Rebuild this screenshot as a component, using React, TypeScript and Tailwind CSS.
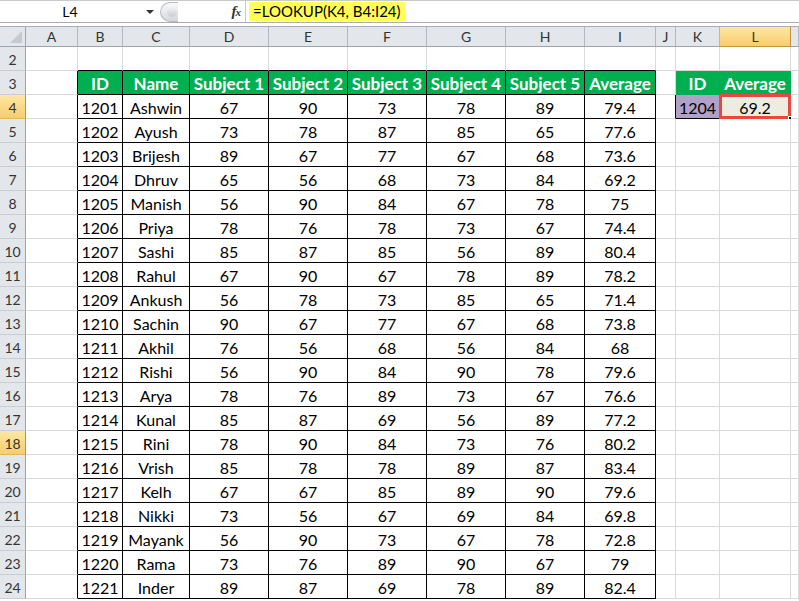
import React from 'react';

const colWidths = [
  'w-[52px]', 'w-[45px]', 'w-[67px]', 'w-[79px]', 'w-[79px]', 'w-[79px]',
  'w-[79px]', 'w-[79px]', 'w-[71px]', 'w-[20px]', 'w-[44px]', 'w-[71px]', 'flex-1',
];
const colNames = ['A', 'B', 'C', 'D', 'E', 'F', 'G', 'H', 'I', 'J', 'K', 'L', 'M'];

const headers = ['ID', 'Name', 'Subject 1', 'Subject 2', 'Subject 3', 'Subject 4', 'Subject 5', 'Average'];

const students: (string | number)[][] = [
  [1201, 'Ashwin', 67, 90, 73, 78, 89, 79.4],
  [1202, 'Ayush', 73, 78, 87, 85, 65, 77.6],
  [1203, 'Brijesh', 89, 67, 77, 67, 68, 73.6],
  [1204, 'Dhruv', 65, 56, 68, 73, 84, 69.2],
  [1205, 'Manish', 56, 90, 84, 67, 78, 75],
  [1206, 'Priya', 78, 76, 78, 73, 67, 74.4],
  [1207, 'Sashi', 85, 87, 85, 56, 89, 80.4],
  [1208, 'Rahul', 67, 90, 67, 78, 89, 78.2],
  [1209, 'Ankush', 56, 78, 73, 85, 65, 71.4],
  [1210, 'Sachin', 90, 67, 77, 67, 68, 73.8],
  [1211, 'Akhil', 76, 56, 68, 56, 84, 68],
  [1212, 'Rishi', 56, 90, 84, 90, 78, 79.6],
  [1213, 'Arya', 78, 76, 89, 73, 67, 76.6],
  [1214, 'Kunal', 85, 87, 69, 56, 89, 77.2],
  [1215, 'Rini', 78, 90, 84, 73, 76, 80.2],
  [1216, 'Vrish', 85, 78, 78, 89, 87, 83.4],
  [1217, 'Kelh', 67, 67, 85, 89, 90, 79.6],
  [1218, 'Nikki', 73, 56, 67, 69, 84, 69.8],
  [1219, 'Mayank', 56, 90, 73, 67, 78, 72.8],
  [1220, 'Rama', 73, 76, 89, 90, 67, 79],
  [1221, 'Inder', 89, 87, 69, 78, 89, 82.4],
];

const highlightedRows = [4, 18];

function inTable(row: number, col: number) {
  return row >= 3 && row <= 24 && col >= 1 && col <= 8;
}

function Cell({ row, col }: { row: number; col: number }) {
  let right = 'border-r-[#dadada]';
  let bottom = 'border-b-[#dadada]';
  let bg = 'bg-white';
  let text = 'text-black';
  let weight = '';
  let content: React.ReactNode = null;

  // black outline of the data table (borders owned by the cell left / above)
  if (inTable(row, col) || (col === 0 && row >= 3 && row <= 24)) right = 'border-r-black';
  if (inTable(row, col) || (row === 2 && col >= 1 && col <= 8)) bottom = 'border-b-black';

  if (inTable(row, col)) {
    if (row === 3) {
      bg = 'bg-[#00b050]';
      text = 'text-white';
      weight = 'font-bold text-[17px]';
      content = headers[col - 1];
    } else {
      content = students[row - 4][col - 1];
    }
  }

  // lookup block K3:L4
  if (row === 3 && (col === 10 || col === 11)) {
    bg = 'bg-[#00b050]';
    text = 'text-white';
    weight = 'font-bold text-[17px]';
    right = 'border-r-[#00b050]';
    bottom = 'border-b-[#00b050]';
    content = col === 10 ? 'ID' : 'Average';
  }
  if (row === 4 && col === 9) right = 'border-r-black';
  if (row === 4 && col === 10) {
    bg = 'bg-[#b1a0c7]';
    bottom = 'border-b-black';
    content = '1204';
  }
  const selected = row === 4 && col === 11;
  if (selected) {
    bg = 'bg-[#eeece1]';
    content = '69.2';
  }

  return (
    <div
      className={`${colWidths[col]} relative h-full shrink-0 border-r border-b ${right} ${bottom} ${bg} ${text} ${weight} flex items-center justify-center pt-[2px] leading-none`}
    >
      {content}
      {selected && (
        <>
          <div className="absolute -left-[1px] -top-[1px] -right-[1px] -bottom-[1px] border-[3px] border-[#e8483f]" />
          <div className="absolute -right-[3px] -bottom-[3px] h-[5px] w-[5px] bg-black border border-white" />
        </>
      )}
    </div>
  );
}

function RowHeader({ row }: { row: number }) {
  const hl = highlightedRows.includes(row);
  return (
    <div
      className={`w-[26px] h-full shrink-0 border-r border-b flex items-center justify-center pt-[2px] text-[14px] leading-none ${
        hl
          ? 'bg-gradient-to-b from-[#fde7a2] to-[#f7cd6b] border-r-[#c4933f] border-b-[#e1b660] text-[#3d3326]'
          : 'bg-[#e3e7ec] border-r-[#9ea4ab] border-b-[#c9cdd2] text-[#333]'
      }`}
    >
      {row}
    </div>
  );
}

export default function App() {
  const rows = Array.from({ length: 23 }, (_, i) => i + 2);

  return (
    <div className="w-[799px] h-[601px] overflow-hidden bg-white font-['Lato','Noto_Sans',sans-serif] text-[16px] select-none">
      {/* Formula bar */}
      <div className="flex h-[23px] border-t border-b border-t-[#c8cacd] border-b-[#a9acb0] bg-white">
        <div className="relative w-[160px] shrink-0 flex items-center justify-center text-[14px] text-black pr-[20px]">
          L4
          <div className="absolute right-[6px] top-[9px] w-0 h-0 border-l-[4px] border-r-[4px] border-t-[4px] border-l-transparent border-r-transparent border-t-[#333]" />
        </div>
        <div className="w-[18px] shrink-0 flex items-center">
          <div className="h-[20px] w-[18px] rounded-l-full border border-r-0 border-[#b7bbc0] bg-gradient-to-b from-[#fafafa] to-[#d4d7db] flex items-center justify-center">
            <div className="ml-[4px] h-[10px] w-[10px] rounded-full bg-gradient-to-b from-[#f2f2f2] to-[#c8ccd1]" />
          </div>
        </div>
        <div className="w-[67px] shrink-0 flex items-center justify-end pr-[5px]">
          <span className="font-['Liberation_Serif',serif] italic font-bold text-[15px] text-[#333] tracking-[-1px]">
            f<span className="text-[11px]">x</span>
          </span>
        </div>
        <div className="flex-1 border-l border-[#c8cacd] flex items-center pl-[3px]">
          <span className="bg-[#ffff57] h-[19px] px-[4px] flex items-center text-[15px] text-black leading-none">
            =LOOKUP(K4, B4:I24)
          </span>
        </div>
      </div>
      <div className="h-[4px] bg-white border-b border-[#a9acb0]" />

      {/* Column headers */}
      <div className="flex h-[20px]">
        <div className="w-[26px] h-full shrink-0 border-r border-b border-r-[#9ea4ab] border-b-[#9ea4ab] bg-[#e3e7ec] relative">
          <svg className="absolute right-[3px] bottom-[3px]" width="12" height="12" viewBox="0 0 12 12">
            <polygon points="12,0 12,12 0,12" fill="#c6cacf" />
          </svg>
        </div>
        {colNames.map((name, i) => (
          <div
            key={name}
            className={`${colWidths[i]} h-full shrink-0 border-r border-b flex items-center justify-center text-[14px] leading-none pt-[1px] ${
              name === 'L'
                ? 'bg-gradient-to-b from-[#fde7a2] to-[#f7cd6b] border-r-[#c4933f] border-b-[#c4933f] text-[#3d3326]'
                : 'bg-[#e3e7ec] border-r-[#b3b8be] border-b-[#9ea4ab] text-[#333]'
            }`}
          >
            {name === 'M' ? '' : name}
          </div>
        ))}
      </div>

      {/* Grid rows */}
      {rows.map((row) => (
        <div key={row} className="flex h-[24px]">
          <RowHeader row={row} />
          {colNames.map((_, col) => (
            <Cell key={col} row={row} col={col} />
          ))}
        </div>
      ))}
    </div>
  );
}
